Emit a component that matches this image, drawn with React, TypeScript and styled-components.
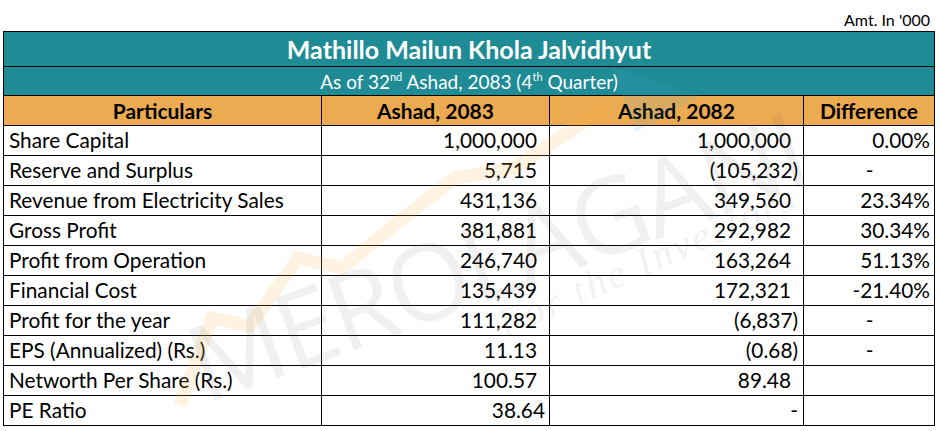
import React from "react";
import styled, { createGlobalStyle } from "styled-components";

const GlobalStyle = createGlobalStyle`
  html, body {
    margin: 0;
    padding: 0;
    background: #ffffff;
    font-family: "Lato", "Open Sans", sans-serif;
  }
`;

const Page = styled.div`
  position: relative;
  width: 940px;
  height: 431px;
  overflow: hidden;
  padding: 8px 0 0 3px;
  box-sizing: border-box;
`;

const Unit = styled.div`
  width: 931px;
  text-align: right;
  font-size: 16px;
  line-height: 23px;
  color: #000;
  padding-right: 4px;
  box-sizing: border-box;
`;

const Table = styled.table`
  border-collapse: collapse;
  width: 931px;
  table-layout: fixed;
  color: #000;
`;

const BannerCell = styled.td<{ $big?: boolean }>`
  background: #1e8b95;
  color: #ffffff;
  border: 1px solid #000;
  text-align: center;
  padding: 0;
  height: ${(p) => (p.$big ? "34px" : "28px")};
  font-size: ${(p) => (p.$big ? "25px" : "19px")};
  font-weight: ${(p) => (p.$big ? 700 : 400)};
  line-height: 1;

  sup {
    font-size: 11px;
    vertical-align: 8px;
    line-height: 0;
  }
`;

const HeadCell = styled.th`
  background: #edab51;
  border: 1px solid #000;
  height: 29px;
  padding: 0;
  font-size: 21px;
  font-weight: 700;
  text-align: center;
`;

const Cell = styled.td<{ $align?: "left" | "right" | "center"; $pr?: number }>`
  border: 1px solid #000;
  height: 29px;
  padding: 0 ${(p) => p.$pr ?? 4}px 0 5px;
  font-size: 20.8px;
  text-align: ${(p) => p.$align ?? "right"};
  white-space: nowrap;
  line-height: 1;
`;

const Watermark = styled.svg`
  position: absolute;
  left: 0;
  top: 0;
  width: 940px;
  height: 431px;
  pointer-events: none;
`;

type Val = { t: string; pr?: number; c?: boolean };
type Row = { label: string; a: Val; b: Val; d: Val };

const rows: Row[] = [
  { label: "Share Capital", a: { t: "1,000,000", pr: 12 }, b: { t: "1,000,000", pr: 12 }, d: { t: "0.00%" } },
  { label: "Reserve and Surplus", a: { t: "5,715", pr: 12 }, b: { t: "(105,232)", pr: 5 }, d: { t: "-", c: true } },
  { label: "Revenue from Electricity Sales", a: { t: "431,136", pr: 12 }, b: { t: "349,560", pr: 12 }, d: { t: "23.34%" } },
  { label: "Gross Profit", a: { t: "381,881", pr: 12 }, b: { t: "292,982", pr: 12 }, d: { t: "30.34%" } },
  { label: "Profit from Operation", a: { t: "246,740", pr: 12 }, b: { t: "163,264", pr: 12 }, d: { t: "51.13%" } },
  { label: "Financial Cost", a: { t: "135,439", pr: 12 }, b: { t: "172,321", pr: 12 }, d: { t: "-21.40%" } },
  { label: "Profit for the year", a: { t: "111,282", pr: 12 }, b: { t: "(6,837)", pr: 5 }, d: { t: "-", c: true } },
  { label: "EPS (Annualized) (Rs.)", a: { t: "11.13", pr: 12 }, b: { t: "(0.68)", pr: 5 }, d: { t: "-", c: true } },
  { label: "Networth Per Share (Rs.)", a: { t: "100.57", pr: 12 }, b: { t: "89.48", pr: 12 }, d: { t: "" } },
  { label: "PE Ratio", a: { t: "38.64", pr: 4 }, b: { t: "-", pr: 5 }, d: { t: "" } },
];

const ValueCell = ({ v }: { v: Val }) => (
  <Cell $align={v.c ? "center" : "right"} $pr={v.pr}>
    {v.t}
  </Cell>
);

// faint "merolagani" watermark sitting over the table
const MeroLogo = () => (
  <Watermark viewBox="0 0 940 431">
    <polyline
      points="180,405 212,318 250,326 298,258 342,268 398,222 455,178 515,168 560,138 606,108"
      fill="none"
      stroke="#f6b546"
      strokeOpacity={0.16}
      strokeWidth={13}
      strokeLinejoin="miter"
    />
    <polygon points="612,66 700,96 636,132" fill="#4fa7d8" fillOpacity={0.13} />
    <text
      x={0}
      y={0}
      transform="translate(205 404) rotate(-20)"
      fontFamily="'Open Sans', sans-serif"
      fontSize={106}
      fill="#6b6b6b"
      fillOpacity={0.1}
      textLength={650}
      lengthAdjust="spacing"
    >
      MEROLAGANI
    </text>
    <text
      x={0}
      y={0}
      transform="translate(505 338) rotate(-24)"
      fontFamily="'Liberation Serif', serif"
      fontStyle="italic"
      fontSize={40}
      fill="#6b6b6b"
      fillOpacity={0.1}
      textLength={320}
    >
      For the Investors
    </text>
  </Watermark>
);

export default function App() {
  return (
    <>
      <GlobalStyle />
      <Page>
        <Unit>Amt. In '000</Unit>
        <Table>
          <colgroup>
            <col style={{ width: 318 }} />
            <col style={{ width: 228 }} />
            <col style={{ width: 254 }} />
            <col style={{ width: 131 }} />
          </colgroup>
          <tbody>
            <tr>
              <BannerCell $big colSpan={4}>
                Mathillo Mailun Khola Jalvidhyut
              </BannerCell>
            </tr>
            <tr>
              <BannerCell colSpan={4}>
                As of 32<sup>nd</sup> Ashad, 2083 (4<sup>th</sup> Quarter)
              </BannerCell>
            </tr>
            <tr>
              <HeadCell>Particulars</HeadCell>
              <HeadCell>Ashad, 2083</HeadCell>
              <HeadCell>Ashad, 2082</HeadCell>
              <HeadCell>Difference</HeadCell>
            </tr>
            {rows.map((r) => (
              <tr key={r.label}>
                <Cell $align="left">{r.label}</Cell>
                <ValueCell v={r.a} />
                <ValueCell v={r.b} />
                <ValueCell v={r.d} />
              </tr>
            ))}
          </tbody>
        </Table>
        <MeroLogo />
      </Page>
    </>
  );
}
